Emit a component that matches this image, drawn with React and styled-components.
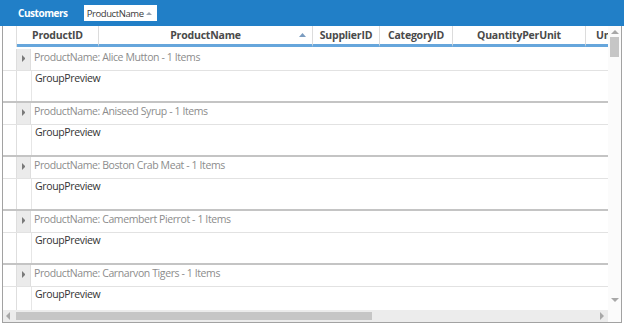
import React from "react";
import styled, { createGlobalStyle } from "styled-components";

const GlobalStyle = createGlobalStyle`
  html, body {
    margin: 0;
    padding: 0;
    background: #ffffff;
  }
  body {
    font-family: "Open Sans", "Noto Sans", "Liberation Sans", sans-serif;
  }
`;

const columns = [
  { title: "ProductID", width: 82 },
  { title: "ProductName", width: 214, sorted: true },
  { title: "SupplierID", width: 67 },
  { title: "CategoryID", width: 73 },
  { title: "QuantityPerUnit", width: 133 },
  { title: "UnitPrice", width: 68 },
];

const groups = [
  "Alice Mutton",
  "Aniseed Syrup",
  "Boston Crab Meat",
  "Camembert Pierrot",
  "Carnarvon Tigers",
];

const Frame = styled.div`
  width: 624px;
  height: 325px;
  display: flex;
  flex-direction: column;
  overflow: hidden;
`;

const TopBar = styled.div`
  height: 26px;
  flex: none;
  background: #217fc7;
  display: flex;
  align-items: center;
  padding-left: 18px;
  gap: 16px;
`;

const Title = styled.span`
  color: #ffffff;
  font-size: 10px;
  font-weight: 700;
  letter-spacing: -0.45px;
`;

const GroupTag = styled.div`
  height: 16px;
  width: 73px;
  box-sizing: border-box;
  background: #ffffff;
  display: flex;
  align-items: center;
  justify-content: space-between;
  padding: 0 5px 0 3px;
  font-size: 9.5px;
  color: #3a3a3a;
  letter-spacing: -0.4px;
  white-space: nowrap;
`;

const GridBox = styled.div`
  flex: none;
  height: 297px;
  margin: 0 2px;
  border: 1px solid #a2a2a2;
  border-top: none;
  box-sizing: border-box;
  display: grid;
  grid-template-columns: 1fr 13px;
  grid-template-rows: 1fr 12px;
  background: #ffffff;
`;

const Body = styled.div`
  overflow: hidden;
  display: flex;
  flex-direction: column;
`;

const HeaderRow = styled.div`
  height: 21px;
  flex: none;
  display: flex;
`;

const Indicator = styled.div`
  width: 13px;
  flex: none;
  border-right: 1px solid #dedede;
  background: #ffffff;
`;

const HeaderCell = styled.div`
  width: ${(p) => p.$w}px;
  flex: none;
  box-sizing: border-box;
  border-right: 1px solid #dcdcdc;
  border-bottom: 3px solid #66a6dc;
  display: flex;
  align-items: center;
  justify-content: center;
  position: relative;
  font-size: 10.5px;
  font-weight: 700;
  color: #4a4a4a;
  letter-spacing: -0.2px;
  white-space: nowrap;
  overflow: hidden;
`;

const SortMark = styled.svg`
  position: absolute;
  right: 6px;
  top: 7px;
`;

const Group = styled.div`
  flex: none;
  display: flex;
  flex-direction: column;
`;

const GroupRow = styled.div`
  height: 21px;
  display: flex;
  border-top: 2px solid ${(p) => (p.$first ? "#ffffff" : "#c4c4c4")};
`;

const Expander = styled.div`
  width: 14px;
  flex: none;
  background: #ebebeb;
  border-right: 1px solid #dedede;
  display: flex;
  align-items: center;
  justify-content: center;
  padding-bottom: 3px;
  box-sizing: border-box;
`;

const GroupText = styled.div`
  padding: 0 0 0 3px;
  line-height: 16px;
  font-size: 10.5px;
  color: #8c8c8c;
  letter-spacing: -0.4px;
  white-space: nowrap;
`;

const PreviewRow = styled.div`
  height: 30px;
  display: flex;
  border-top: 1px solid #e2e2e2;
`;

const Indent = styled.div`
  width: 14px;
  flex: none;
  border-right: 1px solid #e6e6e6;
`;

const PreviewText = styled.div`
  padding: 0 0 0 3px;
  line-height: 14px;
  font-size: 10.5px;
  color: #333333;
  letter-spacing: -0.35px;
`;

const VScroll = styled.div`
  display: flex;
  flex-direction: column;
  align-items: center;
  padding-top: 4px;
  background: #fbfbfb;
`;

const VThumb = styled.div`
  width: 9px;
  height: 20px;
  margin-top: 3px;
  background: #c6c6c6;
`;

const Spacer = styled.div`
  flex: 1;
`;

const VBottom = styled.div`
  height: 8px;
`;

const HScroll = styled.div`
  display: flex;
  align-items: center;
  background: #ececec;
  padding: 0 4px 0 3px;
`;

const HThumb = styled.div`
  width: 356px;
  height: 8px;
  margin-left: 6px;
  background: #c6c6c6;
`;

const Corner = styled.div`
  background: #fbfbfb;
`;

const Arrow = ({ dir, color = "#a8a8a8", size = 4 }) => {
  const s = size;
  const pts = {
    up: `0,${s} ${s},0 ${s * 2},${s}`,
    down: `0,0 ${s * 2},0 ${s},${s}`,
    left: `${s},0 ${s},${s * 2} 0,${s}`,
    right: `0,0 0,${s * 2} ${s},${s}`,
  }[dir];
  const vertical = dir === "up" || dir === "down";
  return (
    <svg width={vertical ? s * 2 : s} height={vertical ? s : s * 2} style={{ flex: "none" }}>
      <polygon points={pts} fill={color} />
    </svg>
  );
};

export default function App() {
  return (
    <>
      <GlobalStyle />
      <Frame>
        <TopBar>
          <Title>Customers</Title>
          <GroupTag>
            ProductName
            <Arrow dir="up" color="#9aa4b0" size={3} />
          </GroupTag>
        </TopBar>
        <GridBox>
          <Body>
            <HeaderRow>
              <Indicator />
              {columns.map((c) => (
                <HeaderCell key={c.title} $w={c.width}>
                  {c.title}
                  {c.sorted && (
                    <SortMark width="7" height="4">
                      <polygon points="0,4 3.5,0 7,4" fill="#7a9cc0" />
                    </SortMark>
                  )}
                </HeaderCell>
              ))}
            </HeaderRow>
            {groups.map((name, i) => (
              <Group key={name}>
                <GroupRow $first={i === 0}>
                  <Indicator />
                  <Expander>
                    <Arrow dir="right" color="#7a7a7a" size={3.5} />
                  </Expander>
                  <GroupText>ProductName: {name} - 1 Items</GroupText>
                </GroupRow>
                <PreviewRow>
                  <Indicator />
                  <Indent />
                  <PreviewText>GroupPreview</PreviewText>
                </PreviewRow>
              </Group>
            ))}
          </Body>
          <VScroll>
            <Arrow dir="up" />
            <VThumb />
            <Spacer />
            <Arrow dir="down" />
            <VBottom />
          </VScroll>
          <HScroll>
            <Arrow dir="left" />
            <HThumb />
            <Spacer />
            <Arrow dir="right" />
          </HScroll>
          <Corner />
        </GridBox>
      </Frame>
    </>
  );
}
